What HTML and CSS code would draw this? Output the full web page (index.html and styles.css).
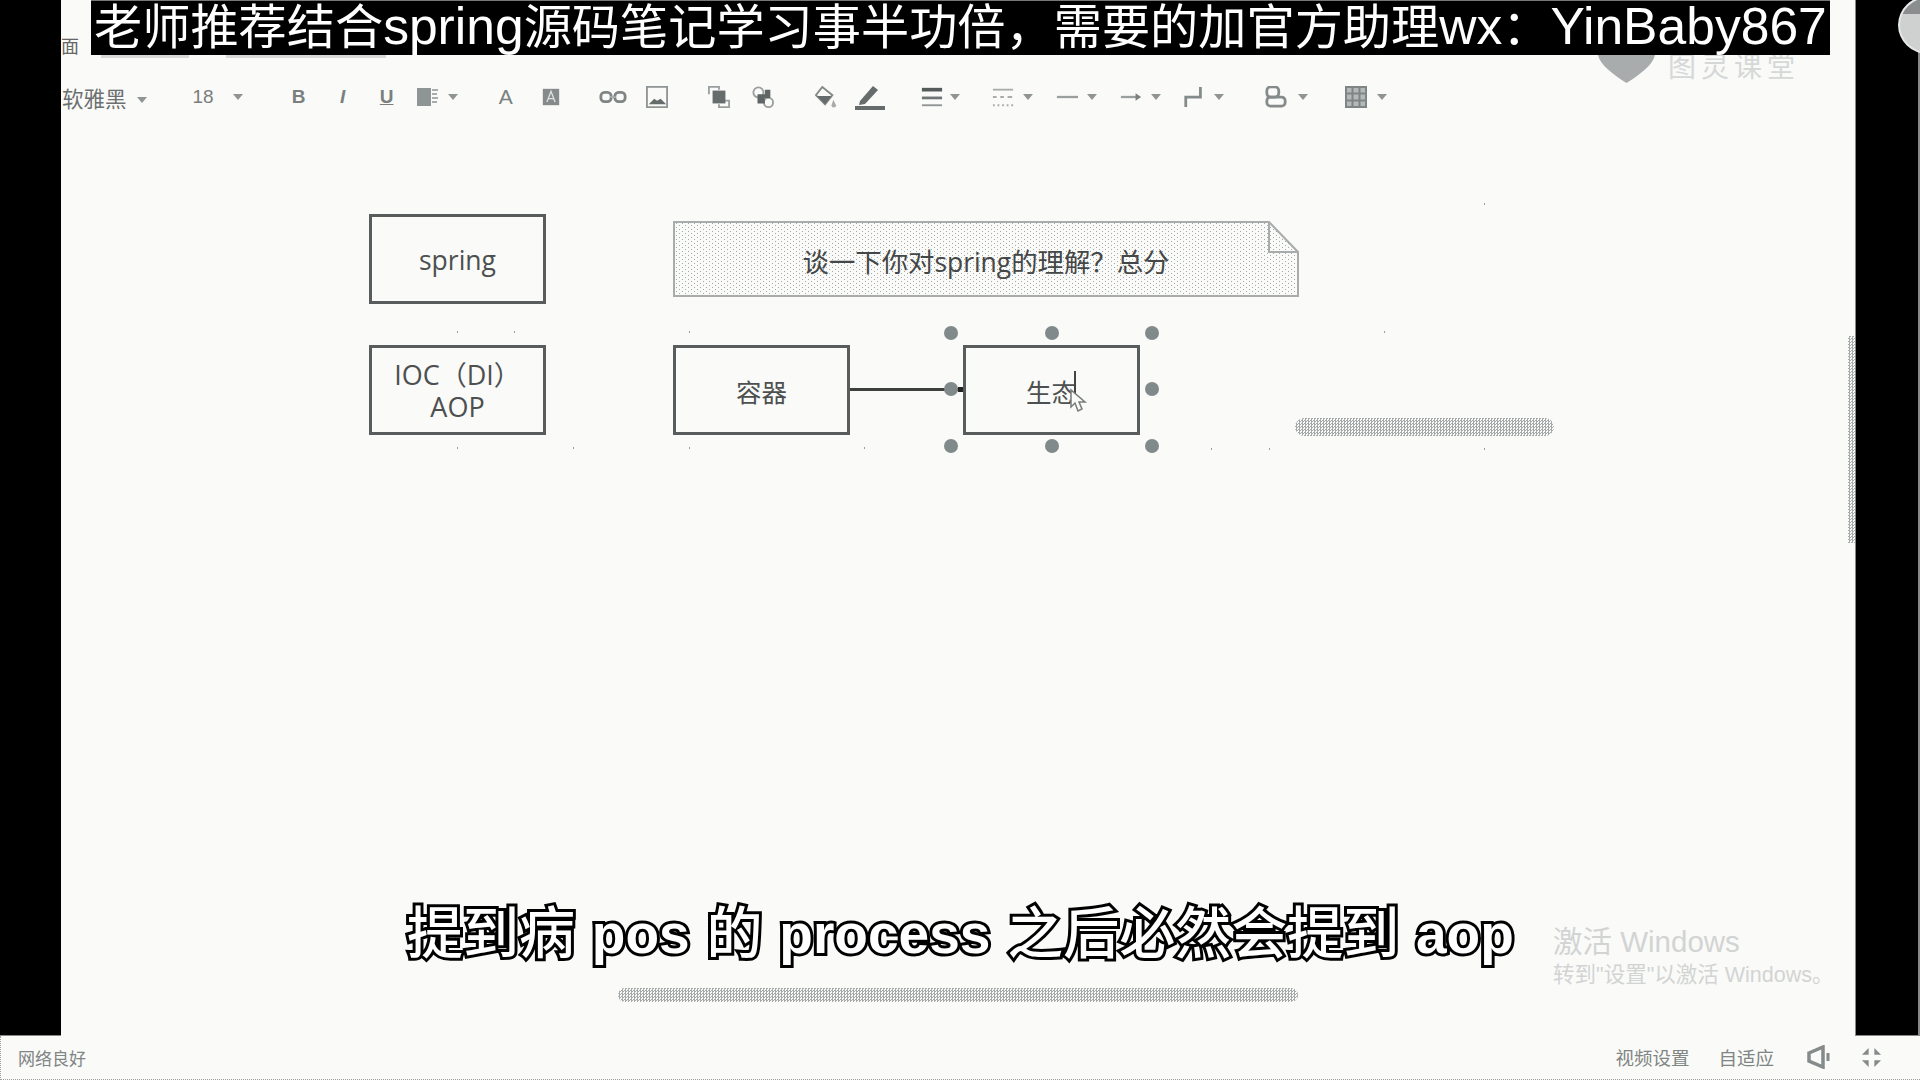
FILE: index.html
```html
<!DOCTYPE html>
<html lang="zh-CN">
<head>
<meta charset="utf-8">
<title>spring</title>
<link rel="stylesheet" href="styles.css">
</head>
<body>
<div class="player">
  <div class="stage">
    <div class="side side-left"></div>
    <main class="canvas">
      <div class="menu-tab">面</div>
      <div class="ghost g1"></div>
      <div class="ghost g2"></div>

      <div class="toolbar">
        <div class="drop t-font"><span class="tb-text font-name">软雅黑</span><i class="caret"></i></div>
        <div class="drop t-size"><span class="tb-text size">18</span><i class="caret"></i></div>
        <div class="cell t-b"><span class="tb-b">B</span></div>
        <div class="cell"><span class="tb-i">I</span></div>
        <div class="cell"><span class="tb-u">U</span></div>
        <div class="drop t-hl"><svg class="ic" viewBox="0 0 22 22"><path d="M1 2h14v18H1z" fill="#8f9494"/><path d="M16 4h6M16 8h5M16 12h6M16 16h5" stroke="#a8acac" stroke-width="2"/></svg><i class="caret"></i></div>
        <div class="cell t-a"><span class="tb-a">A</span></div>
        <div class="cell t-abox"><svg class="ic box18" viewBox="0 0 22 22"><path d="M1 1h20v20H1z" fill="#858a8a"/><path d="M6 17l5-13 5 13M8 13h6" fill="none" stroke="#dfe1e1" stroke-width="1.6"/></svg></div>
        <div class="cell t-link"><svg class="ic wide" viewBox="0 0 30 22"><rect x="2" y="6" width="11" height="10" rx="4" fill="none" stroke="#7f8585" stroke-width="3"/><rect x="17" y="6" width="11" height="10" rx="4" fill="none" stroke="#7f8585" stroke-width="3"/><path d="M12 11h6" stroke="#a8acac" stroke-width="2"/></svg></div>
        <div class="cell"><svg class="ic" viewBox="0 0 24 24"><path d="M1 1h22v22H1z" fill="none" stroke="#8f9494" stroke-width="2"/><path d="M3 20l6-6 3 2 4-2 6 6z" fill="#666b6b"/></svg></div>
        <div class="cell t-front"><svg class="ic" viewBox="0 0 24 24"><path d="M1 9V1h11v3M17 16h6v7H12v-3" fill="none" stroke="#9a9f9f" stroke-width="2"/><path d="M5 5h14v14H5z" fill="#666b6b"/></svg></div>
        <div class="cell"><svg class="ic" viewBox="0 0 24 24"><circle cx="7" cy="7" r="5.5" fill="none" stroke="#9a9f9f" stroke-width="2"/><circle cx="18" cy="18" r="5" fill="none" stroke="#9a9f9f" stroke-width="2"/><path d="M6 9h8V4h6v9h-6v6H6z" fill="#5f6464"/></svg></div>
        <div class="cell t-fill"><svg class="ic" viewBox="0 0 24 24"><path d="M8 1l11 9-8 10L1 10z" fill="#fafaf8" stroke="#858a8a" stroke-width="2"/><path d="M2 11h16l-7 9z" fill="#666b6b"/><path d="M20 15l3 6a2.500 2.500 0 0 1-5 0z" fill="#a8acac"/></svg></div>
        <div class="cell"><svg class="ic pen" viewBox="0 0 32 26"><path d="M6 17L19 2l5 4-13 14-6 1z" fill="#666b6b"/><path d="M1 24h30" stroke="#666b6b" stroke-width="4"/></svg></div>
        <div class="drop t-lines"><svg class="ic" viewBox="0 0 24 22"><path d="M1 3h22" stroke="#555a5a" stroke-width="4"/><path d="M1 12h22" stroke="#6f7575" stroke-width="3"/><path d="M1 20h22" stroke="#8f9494" stroke-width="2"/></svg><i class="caret"></i></div>
        <div class="drop t-dash"><svg class="ic" viewBox="0 0 24 22"><path d="M1 3h22" stroke="#a8acac" stroke-width="2"/><path d="M1 11h4M9 11h4M17 11h5" stroke="#a8acac" stroke-width="2"/><path d="M1 20h2M6 20h2M11 20h2M16 20h2M21 20h2" stroke="#a8acac" stroke-width="2"/></svg><i class="caret"></i></div>
        <div class="drop t-line"><svg class="ic" viewBox="0 0 24 22"><path d="M1 11h23" stroke="#999e9e" stroke-width="2.500"/></svg><i class="caret"></i></div>
        <div class="drop t-arrow"><svg class="ic" viewBox="0 0 24 22"><path d="M1 11h18" stroke="#999e9e" stroke-width="2.500"/><path d="M17 7l6 4-6 4z" fill="#7a7f7f"/></svg><i class="caret"></i></div>
        <div class="drop t-conn"><svg class="ic" viewBox="0 0 24 24"><path d="M3 23V12h16V1" fill="none" stroke="#858a8a" stroke-width="3"/></svg><i class="caret"></i></div>
        <div class="drop t-shadow"><svg class="ic" viewBox="0 0 24 24"><rect x="2" y="1" width="13" height="11" rx="4" fill="none" stroke="#858a8a" stroke-width="3"/><rect x="2" y="12" width="20" height="10" rx="4" fill="none" stroke="#858a8a" stroke-width="3"/></svg><i class="caret"></i></div>
        <div class="drop t-grid"><svg class="ic" viewBox="0 0 22 22"><path d="M1 1h20v20H1z" fill="#b4b8b8"/><path d="M1 1h20v20H1zM1 7.500h20M1 14.500h20M7.500 1v20M14.500 1v20" fill="none" stroke="#7f8585" stroke-width="2"/></svg><i class="caret"></i></div>
      </div>

      <div class="brand">
        <svg class="brand-mark" viewBox="0 0 57 28"><path d="M0 0H57C55 10 41 20 28.500 28 16 20 2 10 0 0z" fill="#a8acac"/></svg>
        <span class="brand-text">图灵课堂</span>
      </div>

      <div class="node box-spring">spring</div>
      <div class="node box-ioc"><div>IOC（DI）<br>AOP</div></div>
      <div class="node box-container">容器</div>
      <div class="node box-eco"><span>生态<i class="text-cursor"></i></span></div>

      <svg class="note" viewBox="0 0 626 76">
        <defs><pattern id="dots" width="6" height="4" patternUnits="userSpaceOnUse"><rect width="1" height="1" fill="#a4a8a8"/><rect x="3" y="2" width="1" height="1" fill="#a4a8a8"/></pattern></defs>
        <path d="M1 1H596L625 31V75H1z" fill="url(#dots)" stroke="#a8acac" stroke-width="2"/>
        <path d="M596 1V31H625" fill="none" stroke="#a8acac" stroke-width="2"/>
      </svg>
      <div class="note-text">谈一下你对spring的理解？总分</div>

      <div class="connector"></div>
      <div class="arrow-tip"></div>

      <i class="handle h1"></i><i class="handle h2"></i><i class="handle h3"></i>
      <i class="handle h4"></i><i class="handle h5"></i>
      <i class="handle h6"></i><i class="handle h7"></i><i class="handle h8"></i>

      <svg class="pointer" viewBox="0 0 18 26"><path d="M2 2v17l4-4 3 8 4-2-3-7h6z" fill="#fafaf8" stroke="#777c7c" stroke-width="1.500"/></svg>

      <i class="speck s1"></i><i class="speck s2"></i><i class="speck s3"></i><i class="speck s4"></i>
      <i class="speck s5"></i><i class="speck s6"></i><i class="speck s7"></i><i class="speck s8"></i>
      <i class="speck s9"></i><i class="speck s10"></i><i class="speck s11"></i><i class="speck s12"></i>

      <div class="smear smear-side"></div>
      <div class="smear smear-bottom"></div>

      <div class="subtitle">提到病 <b>pos</b> 的 <b>process</b> 之后必然会提到 <b>aop</b></div>

      <div class="activate">
        <div class="activate-title">激活 Windows</div>
        <div class="activate-sub">转到"设置"以激活 Windows。</div>
      </div>

      <div class="scrollbar"></div>
    </main>
    <div class="side side-right"></div>
  </div>

  <footer class="status">
    <span class="net">网络良好</span>
    <div class="status-right">
      <span>视频设置</span>
      <span>自适应</span>
      <svg class="st-ic speaker" viewBox="0 0 24 24"><path d="M2 8l14-6v20L2 16z" fill="none" stroke="#858a8a" stroke-width="3.500"/><path d="M21 8v8" stroke="#858a8a" stroke-width="3"/></svg>
      <svg class="st-ic shrink" viewBox="0 0 22 22"><path d="M8 8H1L8 1zM14 8h7L14 1zM8 14H1l7 7zM14 14h7l-7 7z" fill="#858a8a"/></svg>
    </div>
  </footer>

  <div class="ad">老师推荐结合<b>spring</b>源码笔记学习事半功倍，需要的加官方助理<b>wx</b>：<b>YinBaby867</b></div>
  <div class="avatar"></div>
</div>
</body>
</html>
```
FILE: styles.css
```css
* { box-sizing: border-box; }
html, body { margin: 0; height: 100%; background: #fafaf8; overflow: hidden; }
body { font-family: "Liberation Sans", "Noto Sans CJK SC", sans-serif; }
.player { position: relative; width: 1920px; height: 1080px; display: flex; flex-direction: column; }
.stage { flex: 0 0 1036px; display: grid; grid-template-columns: 62px 1793px 65px; }
.side { background: #000; border-bottom: 1px solid #888; }
.side-left { border-right: 1px solid #888; }
.side-right { border-left: 1px solid #888; border-right: 2px solid #888; }
.canvas { position: relative; background: #fafaf8; overflow: hidden; margin-left: -1px; width: 1794px; }

.menu-tab { position: absolute; left: 0; top: 37px; font-size: 18px; color: #666; line-height: 20px; }
.ghost { position: absolute; top: 55px; height: 3px; background: #d8dada; }
.g1 { left: 40px; width: 88px; }
.g2 { left: 165px; width: 160px; }

.toolbar { position: absolute; left: 1px; top: 84px; height: 26px; display: flex; align-items: center; }
.cell { width: 44px; display: flex; justify-content: center; align-items: center; }
.drop { display: flex; align-items: center; gap: 9px; }
.t-font { gap: 10px; padding-top: 6px; }
.t-size { margin-left: 46px; gap: 19px; }
.t-b { margin-left: 34px; }
.t-hl { margin-left: 7px; gap: 10px; }
.t-a { margin-left: 26px; }
.t-abox { margin-left: 1px; }
.t-link { margin-left: 18px; }
.t-front { margin-left: 18px; }
.t-fill { margin-left: 19px; }
.t-lines { margin-left: 29px; gap: 7px; }
.t-dash { margin-left: 32px; }
.t-line { margin-left: 23px; }
.t-arrow { margin-left: 23px; }
.t-conn { margin-left: 22px; }
.t-shadow { margin-left: 41px; gap: 11px; }
.t-grid { margin-left: 37px; gap: 10px; }
.tb-text { line-height: 24px; color: #6c7070; }
.font-name { font-size: 21.5px; }
.size { font-size: 19px; color: #7a7e7e; }
.caret { width: 0; height: 0; border: 5px solid transparent; border-top: 6px solid #8f9494; border-bottom: 0; flex: none; }
.tb-b, .tb-i, .tb-u, .tb-a { font-size: 19px; line-height: 22px; color: #7a8080; font-weight: 700; }
.tb-i { font-style: italic; }
.tb-u { text-decoration: underline; }
.tb-a { font-weight: 400; font-size: 21px; }
.ic { width: 22px; height: 22px; display: block; flex: none; }
.ic.wide { width: 28px; }
.ic.box18 { width: 18px; height: 20px; }
.ic.pen { width: 32px; height: 26px; }

.brand { position: absolute; left: 1537px; top: 55px; display: flex; gap: 13px; align-items: flex-start; }
.brand-mark { width: 57px; height: 28px; display: block; }
.brand-text { font-size: 28px; line-height: 24px; color: #d6d8d8; margin-top: 1px; letter-spacing: 5px; }

.node { position: absolute; width: 177px; height: 90px; border: 3px solid #585c5c; display: flex; align-items: center; justify-content: center; text-align: center; color: #4d5050; font-family: "Open Sans", "Noto Sans CJK SC", sans-serif; font-size: 26.5px; line-height: 32px; }
.box-spring { left: 308px; top: 214px; padding-top: 1px; }
.box-ioc { left: 308px; top: 345px; font-size: 27px; padding-top: 1px; }
.box-container { left: 612px; top: 345px; padding-top: 3px; font-size: 25.5px; }
.box-eco { left: 902px; top: 345px; padding-top: 3px; font-size: 25.5px; }
.box-eco span { position: relative; }
.text-cursor { position: absolute; right: 1px; top: -5px; width: 2px; height: 24px; background: #444; }

.note { position: absolute; left: 612px; top: 221px; width: 626px; height: 76px; }
.note-text { position: absolute; left: 612px; top: 221px; width: 626px; height: 76px; display: flex; align-items: center; justify-content: center; padding-top: 2px; font-family: "Open Sans", "Noto Sans CJK SC", sans-serif; font-size: 26.4px; color: #444747; }

.connector { position: absolute; left: 789px; top: 388px; width: 110px; height: 3px; background: #3e4040; }
.arrow-tip { position: absolute; left: 897px; top: 387px; width: 5px; height: 5px; background: #222; }

.handle { position: absolute; width: 14px; height: 14px; border-radius: 50%; background: #808a8a; transform: translate(-50%, -50%); }
.h1 { left: 890px; top: 333px; } .h2 { left: 991px; top: 333px; } .h3 { left: 1091px; top: 333px; }
.h4 { left: 890px; top: 389px; } .h5 { left: 1091px; top: 389px; }
.h6 { left: 890px; top: 446px; } .h7 { left: 991px; top: 446px; } .h8 { left: 1091px; top: 446px; }

.pointer { position: absolute; left: 1008px; top: 388px; width: 18px; height: 26px; }

.speck { position: absolute; width: 1px; height: 2px; background: #9a9f9f; }
.s1 { left: 396px; top: 331px; } .s2 { left: 453px; top: 331px; } .s3 { left: 628px; top: 331px; }
.s4 { left: 396px; top: 447px; } .s5 { left: 512px; top: 447px; } .s6 { left: 628px; top: 447px; }
.s7 { left: 803px; top: 447px; } .s8 { left: 1423px; top: 203px; } .s9 { left: 1323px; top: 331px; }
.s10 { left: 1150px; top: 448px; } .s11 { left: 1208px; top: 448px; } .s12 { left: 1423px; top: 448px; }

.smear { position: absolute; border-radius: 9px; background: conic-gradient(#a4a8a8 25%, #fafaf8 0 50%, #a4a8a8 0 75%, #fafaf8 0) 0 0 / 3px 3px; }
.smear-side { left: 1234px; top: 418px; width: 259px; height: 18px; }
.smear-bottom { left: 557px; top: 988px; width: 680px; height: 14px; }

.subtitle { position: absolute; left: 346px; top: 899px; white-space: nowrap; font-size: 56px; line-height: 70px; font-weight: 500; color: #fff; -webkit-text-stroke: 6px #000; paint-order: stroke fill; word-spacing: 1.3px; }
.subtitle b { font-size: 55px; font-weight: 700; }

.activate { position: absolute; left: 1492px; top: 926px; color: #d2d4d4; white-space: nowrap; }
.activate-title { font-size: 29.5px; line-height: 32px; }
.activate-sub { font-size: 21.5px; line-height: 26px; margin-top: 4px; }

.scrollbar { position: absolute; right: 0; top: 336px; width: 7px; height: 207px; background: conic-gradient(#a8acac 25%, #fafaf8 0 50%, #a8acac 0 75%, #fafaf8 0) 0 0 / 3px 3px; }

.status { flex: 1; display: flex; align-items: center; justify-content: space-between; padding: 0 38px 1px 17px; font-size: 18.5px; color: #808585; border-bottom: 1px dotted #9a9f9f; border-left: 1px dotted #9a9f9f; font-family: "Noto Sans CJK SC", sans-serif; }
.net { font-size: 17px; }
.status-right { display: flex; align-items: center; gap: 29px; }
.st-ic { display: block; }
.speaker { width: 24px; height: 24px; margin-left: 4px; }
.shrink { width: 21px; height: 21px; margin-left: 1px; }

.ad { position: absolute; left: 91px; top: 0; width: 1739px; height: 55px; background: #000; color: #fff; font-size: 48.2px; line-height: 50px; white-space: nowrap; padding-left: 3px; border-top: 1px solid #777; }
.ad b { font-size: 51.6px; font-weight: 400; }
.avatar { position: absolute; left: 1898px; top: -4px; width: 60px; height: 58px; border-radius: 50%; background: linear-gradient(#8a8e8e 0 30%, #cfd1d1 30%); border: 2px solid #e6e8e8; }
```
